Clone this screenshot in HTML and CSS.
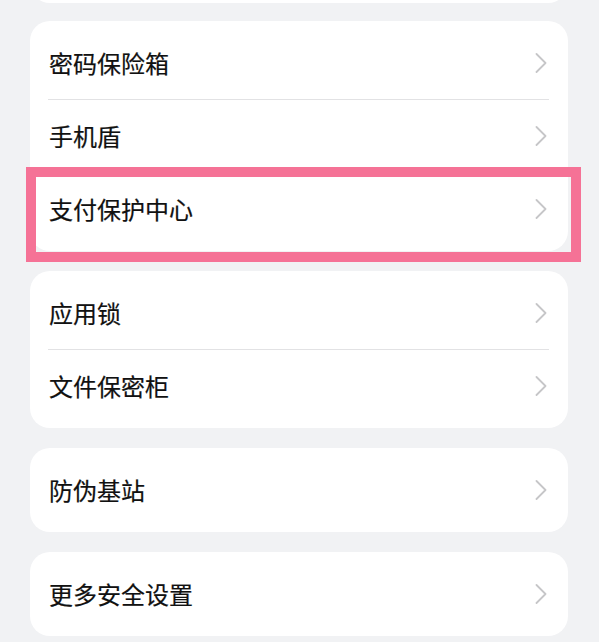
FILE: index.html
```html
<!DOCTYPE html>
<html lang="zh-CN">
<head>
<meta charset="utf-8">
<title>安全设置</title>
<link rel="stylesheet" href="styles.css">
</head>
<body>
<div class="page">
  <div class="card card-top"></div>

  <div class="card card-marked">
    <div class="row"><span class="label">密码保险箱</span><svg class="chev" viewBox="0 0 12 20"><polyline points="1.5,1 10.5,10 1.5,19"/></svg></div>
    <div class="divider"></div>
    <div class="row"><span class="label">手机盾</span><svg class="chev" viewBox="0 0 12 20"><polyline points="1.5,1 10.5,10 1.5,19"/></svg></div>
    <div class="divider"></div>
    <div class="row"><span class="label">支付保护中心</span><svg class="chev" viewBox="0 0 12 20"><polyline points="1.5,1 10.5,10 1.5,19"/></svg></div>
    <div class="highlight"></div>
  </div>

  <div class="card">
    <div class="row"><span class="label">应用锁</span><svg class="chev" viewBox="0 0 12 20"><polyline points="1.5,1 10.5,10 1.5,19"/></svg></div>
    <div class="divider"></div>
    <div class="row"><span class="label">文件保密柜</span><svg class="chev" viewBox="0 0 12 20"><polyline points="1.5,1 10.5,10 1.5,19"/></svg></div>
  </div>

  <div class="card">
    <div class="row"><span class="label">防伪基站</span><svg class="chev" viewBox="0 0 12 20"><polyline points="1.5,1 10.5,10 1.5,19"/></svg></div>
  </div>

  <div class="card">
    <div class="row"><span class="label">更多安全设置</span><svg class="chev" viewBox="0 0 12 20"><polyline points="1.5,1 10.5,10 1.5,19"/></svg></div>
  </div>
</div>
</body>
</html>
```

FILE: styles.css
```css
html, body {
  margin: 0;
  padding: 0;
  background: #f1f2f4;
}

body {
  font-family: "Noto Sans CJK SC", "Noto Sans", sans-serif;
  color: #111111;
  overflow: hidden;
}

.page {
  width: 538px;
  margin-left: 30px;
  display: flex;
  flex-direction: column;
  gap: 20px;
}

.card {
  background: #ffffff;
  border-radius: 20px;
  padding: 6px 0;
  display: flex;
  flex-direction: column;
}

.card-top {
  height: 72px;
  margin-top: -81px;
  margin-bottom: -2px;
}

.card-marked {
  position: relative;
}

.row {
  height: 72px;
  display: flex;
  align-items: center;
  justify-content: space-between;
  padding: 0 21px 0 19px;
}

.label {
  font-size: 24px;
  line-height: 1;
  letter-spacing: 0;
  -webkit-text-stroke: 0.2px #111111;
}

.chev {
  width: 12px;
  height: 20px;
  flex: none;
}

.chev polyline {
  fill: none;
  stroke: #c6c6c8;
  stroke-width: 1.8;
  stroke-linecap: round;
  stroke-linejoin: round;
}

.divider {
  height: 1px;
  background: #e2e2e4;
  margin: 0 19px 0 18px;
}

.highlight {
  position: absolute;
  left: -4px;
  top: 146px;
  width: 535px;
  height: 75px;
  border: 10px solid #f57296;
  pointer-events: none;
}
```
